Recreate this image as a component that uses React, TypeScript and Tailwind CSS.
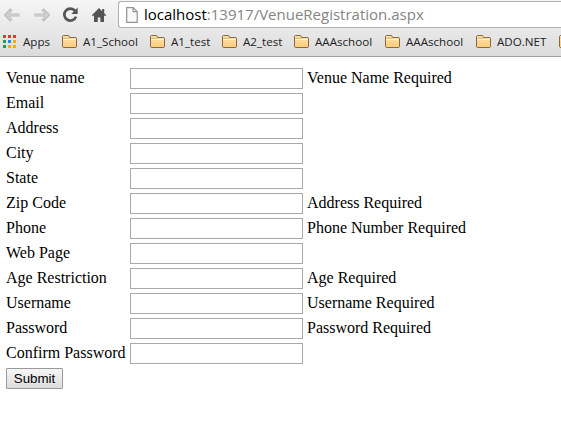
const rows: [string, string][] = [
  ['Venue name', 'Venue Name Required'],
  ['Email', ''],
  ['Address', ''],
  ['City', ''],
  ['State', ''],
  ['Zip Code', 'Address Required'],
  ['Phone', 'Phone Number Required'],
  ['Web Page', ''],
  ['Age Restriction', 'Age Required'],
  ['Username', 'Username Required'],
  ['Password', 'Password Required'],
  ['Confirm Password', ''],
];

const bookmarks = [
  { name: 'A1_School', width: 'w-[88px]' },
  { name: 'A1_test', width: 'w-[72px]' },
  { name: 'A2_test', width: 'w-[72px]' },
  { name: 'AAAschool', width: 'w-[91px]' },
  { name: 'AAAschool', width: 'w-[91px]' },
  { name: 'ADO.NET', width: 'w-[83px]' },
  { name: '', width: 'w-[20px]' },
];

const dots = ['#e8352e', '#e8352e', '#e8352e', '#1f9d55', '#1a8cf0', '#f9ab00', '#1f9d55', '#f9ab00', '#f9ab00'];

function Arrow({ flip = false }: { flip?: boolean }) {
  return (
    <svg width="16" height="14" viewBox="0 0 16 14" className={flip ? '-scale-x-100' : ''}>
      <path d="M7.4 1.4 1.9 7l5.5 5.6M2.5 7H15.5" fill="none" stroke="#b8b8b8" strokeWidth="3.2" />
      <path d="M7 2.2 2.3 7 7 11.8M3 7h11.8" fill="none" stroke="#d2d2d2" strokeWidth="1.5" />
    </svg>
  );
}

function Folder() {
  return (
    <svg width="16" height="14" viewBox="0 0 16 14" className="shrink-0">
      <defs>
        <linearGradient id="folder" x1="0" y1="0" x2="0" y2="1">
          <stop offset="0" stopColor="#ffe6b0" />
          <stop offset="1" stopColor="#fcca78" />
        </linearGradient>
      </defs>
      <path d="M.5 11.8V1.2L1.2.5h5.4l.9 2h6.4l.6.6v8.7l-.7.7H1.2z" fill="url(#folder)" stroke="#8a6840" />
      <path d="M1.5 4.5h12" stroke="#fff3d2" />
      <path d="M1.5 3.2h5.8" stroke="#c99a58" strokeWidth=".7" />
    </svg>
  );
}

export default function App() {
  return (
    <div className="h-[422px] w-[561px] overflow-hidden bg-white text-black">
      <header className="flex h-[57px] flex-col overflow-hidden border-b border-[#a0a0a0] bg-linear-to-b from-[#f6f6f6] to-[#dcdcdc] font-['Open_Sans',sans-serif]">
        <div className="flex h-[28px] shrink-0 items-center">
          <div className="flex w-[118px] shrink-0 items-center pl-[4px] pt-px">
            <Arrow />
            <div className="ml-[14px]"><Arrow flip /></div>
            <svg width="17" height="17" viewBox="0 0 17 17" className="ml-[12px]">
              <path d="M13.1 4.9A6 6 0 1 0 14 10.6" fill="none" stroke="#555" strokeWidth="2.7" />
              <path d="M15.7 1.5v6.4H9.3z" fill="#555" />
            </svg>
            <svg width="16" height="16" viewBox="0 0 16 16" className="ml-[12px]">
              <path d="M8 1 .8 8.2l1.1 1.1L3 8.3V15h3.8v-4.5h2.6V15H13V8.3l1.1 1 1.1-1.1-2-2V2h-2v2.2z" fill="#555" />
            </svg>
          </div>
          <div className="mt-px flex h-[27px] flex-1 items-center self-start rounded-l-[3px] border border-r-0 border-[#b0b0b0] bg-white pl-[7px]">
            <svg width="12" height="16" viewBox="0 0 12 16" className="shrink-0">
              <path d="M.7.7h6.5l4 4v10.6H.7zM7.2.7v4h4" fill="#fafafa" stroke="#929292" strokeWidth="1.2" />
            </svg>
            <span className="ml-[6px] whitespace-nowrap pb-px text-[15px] leading-[21px] text-[#858585]"><span className="text-black">localhost</span>:13917/VenueRegistration.aspx</span>
          </div>
        </div>
        <div className="flex h-[28px] shrink-0 items-center whitespace-nowrap pl-[3px] text-[11.6px] leading-4 text-[#222]">
          <div className="mb-px grid w-[13px] shrink-0 grid-cols-3 gap-[2px]">
            {dots.map((c, i) => <i key={i} className="size-[3px]" style={{ backgroundColor: c }} />)}
          </div>
          <span className="ml-[7px] w-[39px] shrink-0">Apps</span>
          {bookmarks.map((b, i) => (
            <div key={i} className={`flex shrink-0 items-center gap-[5px] ${b.width}`}>
              <Folder />
              <span>{b.name}</span>
            </div>
          ))}
        </div>
      </header>
      <main className="flex flex-col gap-1 pl-[6px] pt-[11px] font-['Liberation_Serif',serif] text-[16px] leading-[19px]">
        {rows.map(([label, message]) => (
          <div key={label} className="flex h-[21px] items-start whitespace-nowrap">
            <label className="w-[124px] shrink-0">{label}</label>
            <input aria-label={label} className="h-[21px] w-[173px] shrink-0 border border-[#a9a9a9] bg-white" />
            <span className="ml-[4px]">{message}</span>
          </div>
        ))}
        <button className="h-[21px] w-[57px] rounded-[1px] border border-[#999] bg-linear-to-b from-[#f6f6f6] to-[#dddddd] font-['Liberation_Sans',sans-serif] text-[13.33px] leading-[18px]">Submit</button>
      </main>
    </div>
  );
}
